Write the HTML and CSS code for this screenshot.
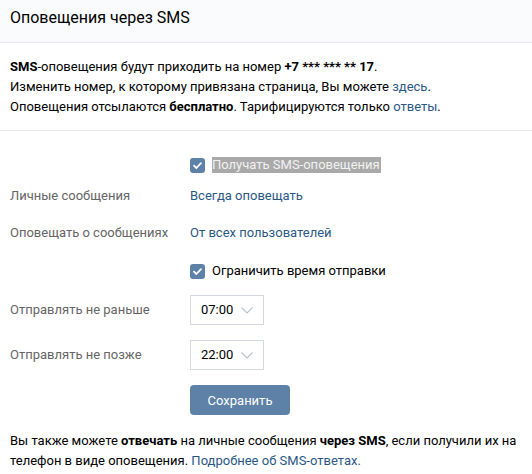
FILE: index.html
```html
<!DOCTYPE html>
<html lang="ru">
<head>
<meta charset="utf-8">
<title>Оповещения через SMS</title>
<link rel="stylesheet" href="styles.css">
</head>
<body>
<div class="page">
  <div class="head">Оповещения через SMS</div>
  <div class="intro">
    <div><b>SMS</b>-оповещения будут приходить на номер <b>+7 *** *** ** 17</b>.</div>
    <div>Изменить номер, к которому привязана страница, Вы можете <a href="#">здесь</a>.</div>
    <div>Оповещения отсылаются <b>бесплатно</b>. Тарифицируются только <a href="#">ответы</a>.</div>
  </div>
  <div class="form">
    <div class="row r1">
      <div class="label"></div>
      <div class="value check"><span class="box"><svg viewBox="0 0 15 15" width="15" height="15"><path d="M4 7.6 L6.4 10 L11 5.2" fill="none" stroke="#fff" stroke-width="1.8" stroke-linecap="round" stroke-linejoin="round"/></svg></span><span class="sel">Получать SMS-оповещения</span></div>
    </div>
    <div class="row r2">
      <div class="label">Личные сообщения</div>
      <div class="value"><a href="#">Всегда оповещать</a></div>
    </div>
    <div class="row r3">
      <div class="label">Оповещать о сообщениях</div>
      <div class="value"><a href="#">От всех пользователей</a></div>
    </div>
    <div class="row r4">
      <div class="label"></div>
      <div class="value check"><span class="box"><svg viewBox="0 0 15 15" width="15" height="15"><path d="M4 7.6 L6.4 10 L11 5.2" fill="none" stroke="#fff" stroke-width="1.8" stroke-linecap="round" stroke-linejoin="round"/></svg></span><span>Ограничить время отправки</span></div>
    </div>
    <div class="row r5">
      <div class="label">Отправлять не раньше</div>
      <div class="value"><div class="select"><span>07:00</span><svg viewBox="0 0 12 7" width="12" height="7"><path d="M0.5 0.5 L6 6 L11.5 0.5" fill="none" stroke="#b8c1cc" stroke-width="1.1"/></svg></div></div>
    </div>
    <div class="row r6">
      <div class="label">Отправлять не позже</div>
      <div class="value"><div class="select"><span>22:00</span><svg viewBox="0 0 12 7" width="12" height="7"><path d="M0.5 0.5 L6 6 L11.5 0.5" fill="none" stroke="#b8c1cc" stroke-width="1.1"/></svg></div></div>
    </div>
    <div class="row r7">
      <div class="label"></div>
      <div class="value"><button class="btn">Сохранить</button></div>
    </div>
  </div>
  <div class="foot">Вы также можете <b>отвечать</b> на личные сообщения <b>через SMS</b>, если получили их на телефон в виде оповещения. <a href="#">Подробнее об SMS-ответах.</a></div>
</div>
</body>
</html>
```

FILE: styles.css
```css
html, body {
  margin: 0;
  padding: 0;
  background: #fff;
}
body {
  font-family: Roboto, "Open Sans", Arial, sans-serif;
  font-size: 13px;
  line-height: 20px;
  color: #000;
}
a {
  color: #2a5885;
  text-decoration: none;
}
b {
  font-weight: 700;
}
.page {
  width: 532px;
}
.head {
  height: 42px;
  line-height: 36px;
  padding: 0 10px;
  font-size: 16px;
  background: #fafbfc;
  border-bottom: 1px solid #e7e8ec;
  box-sizing: content-box;
}
.intro {
  padding: 14px 10px 13px;
  border-bottom: 1px solid #e7e8ec;
}
.form {
  padding: 26px 0 0;
}
.row {
  display: flex;
  align-items: center;
}
.label {
  width: 180px;
  padding-left: 10px;
  color: #656565;
  flex-shrink: 0;
}
.value {
  display: flex;
  align-items: center;
}
.r2 { margin-top: 13px; }
.r3 { margin-top: 17px; }
.r4 { margin-top: 18px; }
.r5 { margin-top: 14px; }
.r6 { margin-top: 15px; }
.r7 { margin-top: 15px; }
.check .box {
  width: 15px;
  height: 15px;
  border-radius: 3px;
  background: #5e81a8;
  display: inline-flex;
  margin-right: 7px;
}
.check .box svg {
  display: block;
}
.sel {
  background: #a9a9a9;
  color: #f2f2f2;
  line-height: 16px;
  padding: 0 1px 0 0;
}
.select {
  height: 28px;
  border: 1px solid #d3d9de;
  display: flex;
  align-items: center;
  justify-content: space-between;
  padding: 0 10px 0 10px;
  box-sizing: content-box;
  width: 52px;
}
.select svg {
  display: block;
  margin-top: 1px;
}
.btn {
  width: 100px;
  height: 30px;
  border: 0;
  border-radius: 4px;
  background: #5e81a8;
  color: #fff;
  font-family: inherit;
  font-size: 13px;
  padding: 0;
  margin: 0;
}
.foot {
  padding: 16px 10px 0;
}
```
